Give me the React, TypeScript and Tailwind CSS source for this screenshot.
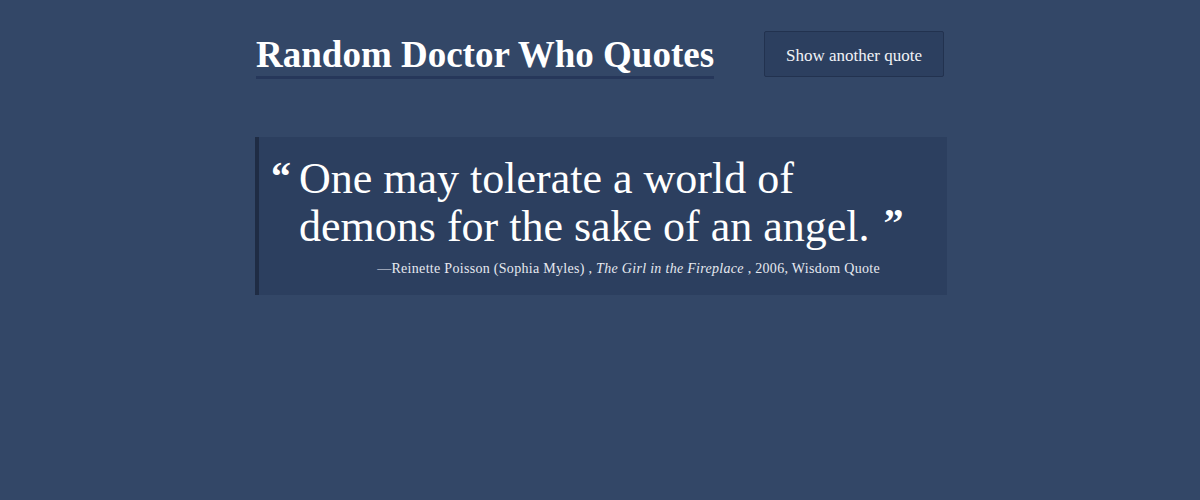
import React from "react";

const serif = "font-['Liberation_Serif','DejaVu_Serif',serif]";

const App = () => {
  return (
    <div className={`min-h-[500px] w-full bg-[#334767] text-white ${serif}`}>
      <div className="mx-auto w-[692px] pt-[31px]">
        <header className="flex items-start justify-between">
          <h1 className="ml-[2px] mt-[4px] border-b-[3px] border-[#26375a] pb-[1px] text-[37px] font-bold leading-[40px]">
            Random Doctor Who Quotes
          </h1>
          <button className="mr-[2px] h-[46px] w-[180px] rounded-[2px] border border-[#22324f] bg-[#2c3f5f] pt-[3px] text-[17px] text-[#f1f3f7]">
            Show another quote
          </button>
        </header>

        <blockquote className="-mr-[1px] ml-[1px] mt-[58px] border-l-4 border-[#1f2c44] bg-[#2c3f5f] pb-[16px] pl-[12px] pr-[40px] pt-[18px]">
          <div className="flex">
            <span className="mr-[8px] mt-[2px] text-[40px] font-bold leading-[40px]">&ldquo;</span>
            <p className="text-[44px] leading-[48px]">
              One may tolerate a world of
              <br />
              demons for the sake of an angel.
              <span className="ml-[14px] align-top text-[40px] font-bold leading-[40px]">&rdquo;</span>
            </p>
          </div>
          <footer className="mt-[7px] pr-[27px] text-right text-[14px] tracking-[0.3px] text-[#e6e9f0]">
            &mdash;Reinette Poisson (Sophia Myles) , <cite className="italic">The Girl in the Fireplace</cite> , 2006, Wisdom Quote
          </footer>
        </blockquote>
      </div>
    </div>
  );
};

export default App;
